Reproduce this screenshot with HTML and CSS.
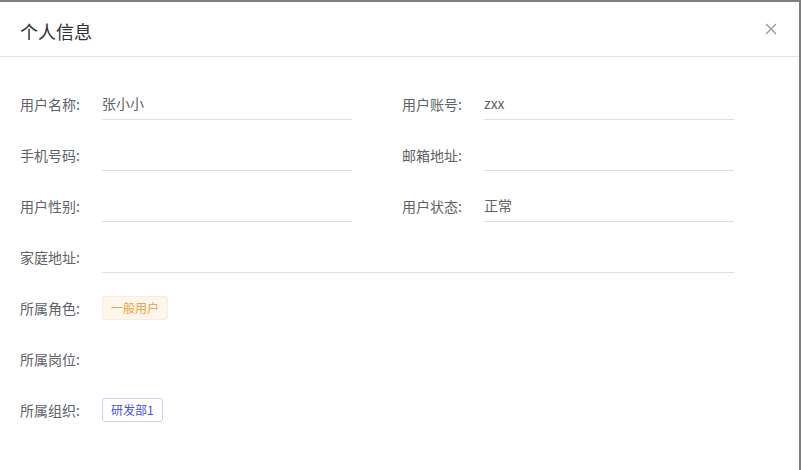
FILE: index.html
```html
<!DOCTYPE html>
<html lang="zh-CN">
<head>
    <meta charset="UTF-8">
    <meta name="viewport" content="width=device-width, initial-scale=1.0">
    <title>个人信息</title>
    <link rel="stylesheet" href="styles.css">
</head>
<body>
    <div class="dialog">
        <div class="dialog-header">
            <span class="dialog-title">个人信息</span>
            <button class="dialog-close" aria-label="关闭">
                <svg width="12" height="12" viewBox="0 0 12 12">
                    <path d="M1 1L11 11M11 1L1 11" stroke="#909399" stroke-width="1.2" fill="none"/>
                </svg>
            </button>
        </div>

        <div class="dialog-body">
            <div class="form-row">
                <div class="form-item">
                    <label class="form-label">用户名称:</label>
                    <div class="form-input">张小小</div>
                </div>
                <div class="form-item">
                    <label class="form-label">用户账号:</label>
                    <div class="form-input">zxx</div>
                </div>
            </div>

            <div class="form-row">
                <div class="form-item">
                    <label class="form-label">手机号码:</label>
                    <div class="form-input"></div>
                </div>
                <div class="form-item">
                    <label class="form-label">邮箱地址:</label>
                    <div class="form-input"></div>
                </div>
            </div>

            <div class="form-row">
                <div class="form-item">
                    <label class="form-label">用户性别:</label>
                    <div class="form-input"></div>
                </div>
                <div class="form-item">
                    <label class="form-label">用户状态:</label>
                    <div class="form-input">正常</div>
                </div>
            </div>

            <div class="form-row">
                <div class="form-item wide">
                    <label class="form-label">家庭地址:</label>
                    <div class="form-input"></div>
                </div>
            </div>

            <div class="form-row">
                <div class="form-item">
                    <label class="form-label">所属角色:</label>
                    <div class="form-tags">
                        <span class="tag tag-warning">一般用户</span>
                    </div>
                </div>
            </div>

            <div class="form-row">
                <div class="form-item">
                    <label class="form-label">所属岗位:</label>
                    <div class="form-tags"></div>
                </div>
            </div>

            <div class="form-row">
                <div class="form-item">
                    <label class="form-label">所属组织:</label>
                    <div class="form-tags">
                        <span class="tag tag-primary">研发部1</span>
                    </div>
                </div>
            </div>
        </div>
    </div>
</body>
</html>
```

FILE: styles.css
```css
html, body {
    height: 100%;
}

body {
    margin: 0;
    background-color: #7f7f7f;
    font-family: "Noto Sans CJK SC", "Liberation Sans", sans-serif;
    overflow: hidden;
}

/* Dialog */
.dialog {
    margin-top: 2px;
    width: 799px;
    height: 468px;
    background-color: #fff;
}

.dialog-header {
    box-sizing: border-box;
    display: flex;
    justify-content: space-between;
    align-items: center;
    height: 55px;
    padding: 4px 22px 0 20px;
    border-bottom: 1px solid #e4e4e7;
}

.dialog-title {
    font-size: 18px;
    color: #303133;
}

.dialog-close {
    display: flex;
    padding: 0;
    margin-top: -5px;
    background: none;
    border: none;
    cursor: pointer;
}

/* Form */
.dialog-body {
    padding: 31px 20px 0;
}

.form-row {
    display: flex;
    margin-bottom: 19px;
}

.form-item {
    display: flex;
    flex-shrink: 0;
    align-items: center;
    width: 382px;
    height: 32px;
}

.form-item.wide {
    width: 714px;
}

.form-label {
    width: 82px;
    flex-shrink: 0;
    font-size: 14px;
    color: #606266;
}

.form-input {
    box-sizing: border-box;
    width: 250px;
    height: 32px;
    line-height: 31px;
    font-size: 14px;
    color: #606266;
    border-bottom: 1px solid #dcdfe6;
}

.form-item.wide .form-input {
    width: 632px;
}

.form-tags {
    display: flex;
    gap: 6px;
}

/* Tags */
.tag {
    display: inline-block;
    box-sizing: border-box;
    height: 24px;
    line-height: 22px;
    padding: 0 8px;
    font-size: 12px;
    border: 1px solid;
    border-radius: 3px;
}

.tag-warning {
    background-color: #fdf6ec;
    border-color: #faecd8;
    color: #e6a23c;
}

.tag-primary {
    background-color: #fff;
    border-color: #c9cffd;
    color: #4452e8;
}
```
